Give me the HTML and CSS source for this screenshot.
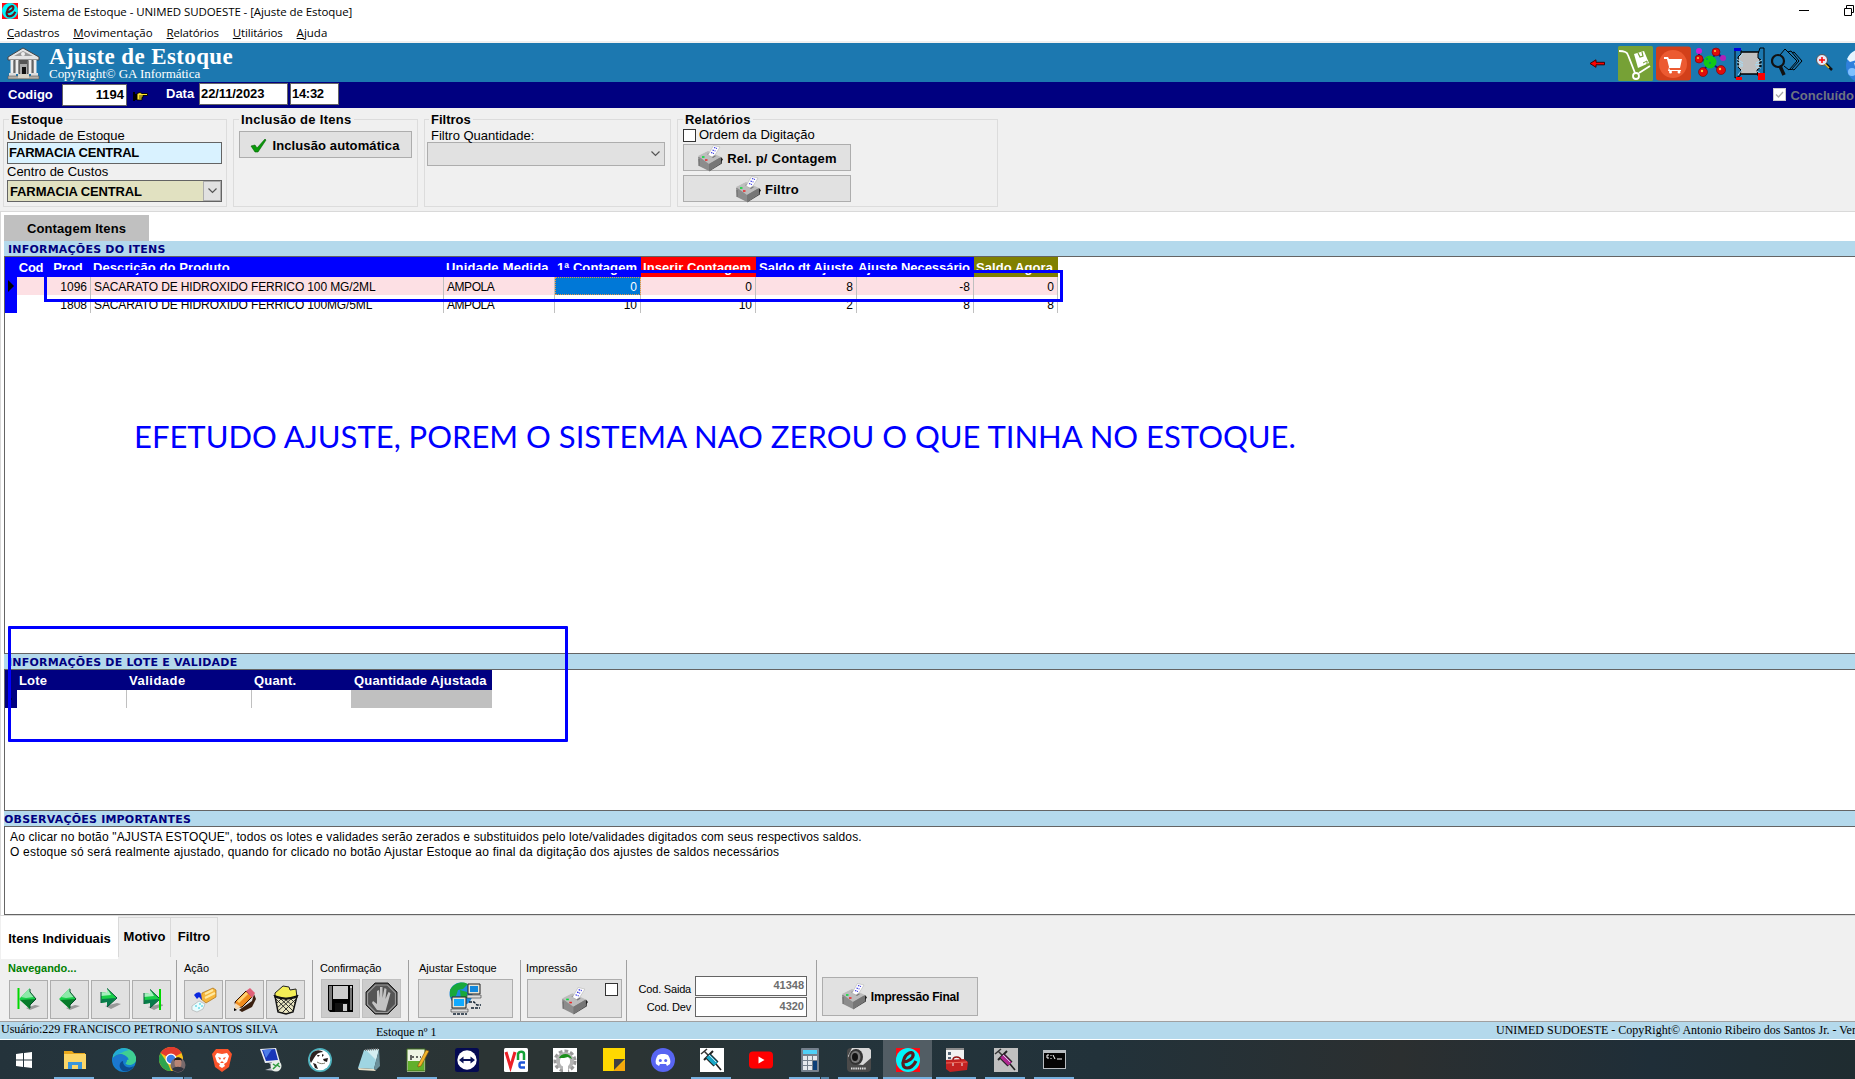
FILE: index.html
```html
<!DOCTYPE html>
<html lang="pt-BR">
<head>
<meta charset="utf-8">
<title>Sistema de Estoque</title>
<link rel="stylesheet" href="styles.css">
</head>
<body>
<svg class="defs" aria-hidden="true">
  <defs>
    <symbol id="printer" viewBox="0 0 26 27">
      <path d="M12 26.500l13-8v-5l-12 6z" fill="#444"/>
      <path d="M1 12l9-5 14 6v5l-12 8L2 21z" fill="#8c8c8c"/>
      <path d="M1 11l10-5 13 6-12 7z" fill="#bdbdbd"/>
      <path d="M12 19l12-7v6l-12 8z" fill="#767676"/>
      <path d="M24 12l2 2.500-2 2.500z" fill="#222"/>
      <path d="M10 9l3-1 6 3-3 2z" fill="#777"/>
      <path d="M11 10l5.500-9.500L23 2l-5 8-3 2z" fill="#fff" stroke="#aaa" stroke-width=".5"/>
      <path d="M17 2.500l3 1M15.500 5l3 1M14 7.500l3 1" stroke="#3030e0" stroke-width="1.200" stroke-dasharray="1.500 .7"/>
      <path d="M5 12h2.500" stroke="#0d3" stroke-width="1.500"/>
      <path d="M8 15h2.500" stroke="#e22" stroke-width="1.500"/>
      <path d="M2 14v7" stroke="#666" stroke-width="1"/>
    </symbol>
    <symbol id="arrow-left" viewBox="0 0 22 22">
      <path d="M8 20l9-3 5 1-10 4z" fill="#999"/>
      <path d="M1 11L12 0v4l6 7-6 6v4z" fill="#18cf48"/>
      <path d="M12 0v4l4 5-8 1-5-1z" fill="#8beaa8"/>
      <path d="M2 12l16-1-6 6v4z" fill="#087a2b"/>
      <path d="M12 1v3l6 7-6 6v3" stroke="#064f2a" fill="none"/>
    </symbol>
    <symbol id="arrow-right" viewBox="0 0 22 22">
      <path d="M6 18l12-3 4 1-10 5z" fill="#999"/>
      <path d="M18 10L8 0v5L2 4v11l6-1v5z" fill="#18cf48"/>
      <path d="M8 0v5L2 4v4l10-1z" fill="#a4f0bc"/>
      <path d="M3 11l14-1-9 9v-5l-6 1z" fill="#087a4b"/>
      <path d="M2 4v11M8 .5l10 9.500L8 19" stroke="#064f3a" fill="none"/>
    </symbol>
    <symbol id="e-logo" viewBox="0 0 24 24">
      <path d="M0 0h24v24H0z" fill="#ff0a14"/>
      <circle cx="12" cy="12" r="12" fill="#00f6fb"/>
      <path d="M7 14C12 14 18 10 17 6c-1-3-7-1-9 5-2 5-1 9 3 9 4 0 7-3 9-7" fill="none" stroke="#5a1c20" stroke-width="3.200"/>
    </symbol>
    <symbol id="syringe" viewBox="0 0 24 24">
      <path d="M1 6l6-5M4 3l6 6" stroke="#333" stroke-width="1.500"/>
      <path d="M4 12l9-9" stroke="#222" stroke-width="2"/>
      <path d="M8 8l8 8" stroke="#222" stroke-width="7"/>
      <path d="M8 8l8 8" stroke="currentColor" stroke-width="5"/>
      <path d="M9 7l7 7" stroke="#cfd8e8" stroke-width="1"/>
      <path d="M16 16l5 6" stroke="#222" stroke-width="1.600"/>
    </symbol>
  </defs>
</svg>

<header class="titlebar">
  <div class="caption">
    <svg class="app-icon" width="16" height="16"><use href="#e-logo"/></svg>
    <span class="t title">Sistema de Estoque - UNIMED SUDOESTE - [Ajuste de Estoque]</span>
    <svg class="controls" width="56" height="12" fill="none" stroke="#000" stroke-width="1"><path d="M0 5.500h10M45.500 3.500h7v7h-7zM47.500 3v-2.500h7v7H53"/></svg>
  </div>
  <nav class="menu">
    <span class="t m1"><u>C</u>adastros</span><span class="t m2"><u>M</u>ovimentação</span><span class="t m3"><u>R</u>elatórios</span><span class="t m4"><u>U</u>tilitários</span><span class="t m5"><u>A</u>juda</span>
  </nav>
</header>

<section class="banner">
  <svg class="bank" width="33" height="33" viewBox="0 0 33 33">
    <path d="M1 10L16 1l16 9v3H1z" fill="#e4e4e4" stroke="#444"/>
    <path d="M7 9l9-5 10 5z" fill="#999"/><circle cx="16" cy="7" r="2" fill="#eee"/>
    <path d="M4 13h25v14H4z" fill="#555"/>
    <path d="M5 13v14M10 13v14M23 13v14M28 13v14" stroke="#eee" stroke-width="3"/>
    <path d="M7 14v12M12 14v12M21 14v12M26 14v12" stroke="#777"/>
    <path d="M13 17h7v10h-7z" fill="#aaa"/><path d="M15 20h4v7h-4z" fill="#111"/>
    <path d="M2 26h7v3H2zM24 26h7v3h-7z" fill="#ddd"/><path d="M1 29h31v3H1z" fill="#b4b0a8" stroke="#555" stroke-width=".6"/><path d="M11 27h11v4H11z" fill="#d8d4c8"/>
  </svg>
  <div class="heading">
    <h1><span class="t h1t">Ajuste de Estoque</span></h1>
    <p><span class="t copy">CopyRight© GA Informática</span></p>
  </div>
  <div class="toolbar">
    <svg width="16" height="9"><path d="M1 4.500L7 .8v2.500h8.500v2.500H7v2.500z" fill="#f00" stroke="#400" stroke-width="1"/></svg>
    <svg width="35" height="35"><rect width="35" height="35" rx="1.500" fill="#76a136"/><g fill="none" stroke="#fff" stroke-width="1.800"><path d="M1 5c6 0 8 1 9 4l7 18M21 27l11-7"/><circle cx="18" cy="30" r="3"/><path d="M16 8l10-3 5 12-11 5z" fill="#fff" stroke="none"/><path d="M20 7l2 4 3-1-1-4" stroke="#76a136" stroke-width="1.200"/><path d="M25 17l4-2v4" stroke="#76a136" stroke-width="1"/></g></svg>
    <svg width="35" height="35"><rect width="35" height="34" rx="3" y=".5" fill="#d2401a"/><circle cx="17" cy="18" r="14" fill="#ec5a31"/><path d="M8 11h4l1 2h13l-2 9H13l1 2h11v1H12l1-4-2-8H8z" fill="#fff"/><circle cx="14.500" cy="26" r="1.500" fill="#fff"/><circle cx="23" cy="26" r="1.500" fill="#fff"/></svg>
    <svg width="32" height="32"><path d="M4 3v9l10 3 8-10 5 6M14 15l-6 10M14 15l12 8" stroke="#10108a" stroke-width="2" fill="none"/><circle cx="4" cy="4" r="3" fill="#d11bd1"/><circle cx="28" cy="11" r="3" fill="#b020b8"/><circle cx="15" cy="15" r="6.500" fill="#10c818"/><g fill="#e00c0c" stroke="#700" stroke-width=".6"><circle cx="4" cy="12" r="4"/><circle cx="21" cy="5" r="4"/><circle cx="8" cy="25" r="4.500"/><circle cx="26" cy="23" r="4.500"/></g><g fill="#ffd23c"><circle cx="3" cy="11" r="1"/><circle cx="20" cy="4" r="1"/><circle cx="7" cy="24" r="1.200"/><circle cx="25" cy="22" r="1.200"/></g><path d="M11 12h2M14 16h2" stroke="#087" stroke-width="1.500"/></svg>
    <svg width="33" height="33"><path d="M5 5h22v22H5z" fill="#c0c0c0" stroke="#000" stroke-width="1.500"/><path d="M2 3v28l5-2 1-6-3-3V10l3-3V3zM31 1h-4l-2 6v4l3 2v7l-4 3 1 6 6 3z" fill="#1c78b0" stroke="#000"/><path d="M4 12l6 4M4 15l6 3M4 19l6 0M29 13l-6 3M29 17l-7 1M6 11l4-5M28 21l-5-1M9 23l-4 5M24 24l4 3" stroke="#a6dcf5" stroke-width="1"/><path d="M1 1h7v3H1z" fill="#0000e0"/><path d="M3 30h6v3H3zM25 26h7v7h-7z" fill="#f00"/></svg>
    <svg width="32" height="30" fill="none" stroke="#000"><path d="M9 7l5-6 12 12-8 9-5-4M17 4l3-1 8 10-8 9-1-1M21 5l2-1 8 9-8 9-2-1" stroke-width="1"/><circle cx="7" cy="13" r="6" stroke-width="2.200" stroke="#111"/><path d="M9 18l4 9" stroke-width="3.500" stroke="#111"/></svg>
    <svg width="18" height="18"><circle cx="6" cy="6" r="5.500" fill="#e8e8f8" stroke="#555"/><path d="M6 3v6M3 6h6" stroke="#f00" stroke-width="1.500"/><path d="M10 10l6 6" stroke="#111" stroke-width="2.500"/><path d="M9 10l4 4" stroke="#e8b820" stroke-width="1.500"/></svg>
    <svg width="36" height="36"><circle cx="18" cy="21" r="17" fill="#2f80dc"/><path d="M2 14c3-7 8-10 16-10v9L5 17z" fill="#e6f5ff"/><path d="M9 18l9-2v10l-6 2z" fill="#bfe3ff"/><circle cx="7" cy="27" r="4" fill="#7fc0ff"/></svg>
  </div>
</section>

<section class="record">
  <label class="lb codigo"><span class="t b13 w1">Codigo</span></label>
  <div class="inp cod"><span class="t b13 w2">1194</span></div>
  <svg class="hand" width="15" height="9"><path d="M0 0h2v9H0zM2 2h2v6H2z" fill="#000"/><path d="M4 1.500L7 .5l2 1h5.500v2H10v2H9v2.500H4z" fill="#ffe62e" stroke="#000" stroke-width=".9"/><path d="M6 4h4M6 6h3" stroke="#000" stroke-width=".7"/></svg>
  <label class="lb data"><span class="t b13 w3">Data</span></label>
  <div class="inp date"><span class="t b13 w4">22/11/2023</span></div>
  <div class="inp time"><span class="t b13 w5">14:32</span></div>
  <div class="done"><svg width="13" height="13"><path d="M0 0h13v13H0z" fill="#ccc"/><path d="M1 1h11v11H1z" fill="#fff"/><path d="M3 6.500l2.500 2.500L10 4" fill="none" stroke="#aaa" stroke-width="1.300"/></svg><span class="t b13 w6">Concluído</span></div>
</section>

<section class="options">
  <div class="group g1">
    <h2><span class="t b13 o1">Estoque</span></h2>
    <p class="fl"><span class="t r13 o2">Unidade de Estoque</span></p>
    <div class="field sky"><span class="t b13 o3">FARMACIA CENTRAL</span></div>
    <p class="fl f2"><span class="t r13 o4">Centro de Custos</span></p>
    <div class="field olive"><span class="t b13 o5">FARMACIA CENTRAL</span><span class="drop"><svg width="9" height="6"><path d="M.5.5l4 4 4-4" fill="none" stroke="#555" stroke-width="1.200"/></svg></span></div>
  </div>
  <div class="group g2">
    <h2><span class="t b13 o6">Inclusão de Itens</span></h2>
    <div class="btn auto"><svg width="17" height="15"><path d="M1 8l4-1 2 3 8-9 1 1-8 12H5z" fill="#0a9a0a" stroke="#056005" stroke-width=".6"/></svg><span class="t b13 o7">Inclusão automática</span></div>
  </div>
  <div class="group g3">
    <h2><span class="t b13 o8">Filtros</span></h2>
    <p class="fl"><span class="t r13 o9">Filtro Quantidade:</span></p>
    <div class="btn combo"><svg width="9" height="6"><path d="M.5.5l4 4 4-4" fill="none" stroke="#555" stroke-width="1.200"/></svg></div>
  </div>
  <div class="group g4">
    <h2><span class="t b13 o10">Relatórios</span></h2>
    <div class="check"><i></i><span class="t r13 o11">Ordem da Digitação</span></div>
    <div class="btn rel"><svg width="26" height="27"><use href="#printer"/></svg><span class="t b13 o12">Rel. p/ Contagem</span></div>
    <div class="btn rel"><svg width="26" height="27"><use href="#printer"/></svg><span class="t b13 o13">Filtro</span></div>
  </div>
</section>

<main class="sheet">
  <div class="tab-top"><span class="t b13 s1">Contagem Itens</span></div>
  <h3 class="bar"><span class="t v11 s2">INFORMAÇÕES DO ITENS</span></h3>
  <div class="pane items">
    <div class="row head">
      <span></span><span class="c"><b class="t i1">Cod</b></span><span class="c"><b class="t i2">Prod</b></span><span><b class="t i3">Descrição do Produto</b></span><span><b class="t i4">Unidade Medida</b></span><span><b class="t i5">1ª Contagem</b></span><span class="red"><b class="t i6">Inserir Contagem</b></span><span class="sd"><b class="t i7">Saldo dt Ajuste</b></span><span class="an"><b class="t i8">Ajuste Necessário</b></span><span class="gold"><b class="t i9">Saldo Agora</b></span>
    </div>
    <div class="row pink">
      <span class="ind"><svg width="7" height="12"><path d="M0 0l6 6-6 6z"/></svg></span><span></span><span class="n">1096</span><span><em class="t d2">SACARATO DE HIDROXIDO FERRICO 100 MG/2ML</em></span><span><em class="t d3">AMPOLA</em></span><span class="n sel">0</span><span class="n">0</span><span class="n">8</span><span class="n">-8</span><span class="n">0</span>
    </div>
    <div class="row">
      <span class="ind"></span><span></span><span class="n">1808</span><span><em class="t d2">SACARATO DE HIDROXIDO FERRICO 100MG/5ML</em></span><span><em class="t d3">AMPOLA</em></span><span class="n">10</span><span class="n">10</span><span class="n">2</span><span class="n">8</span><span class="n">8</span>
    </div>
  </div>
  <h3 class="bar"><span class="t v11 s3">INFORMAÇÕES DE LOTE E VALIDADE</span></h3>
  <div class="pane lots">
    <div class="lrow lhead"><span></span><span><b class="t l1">Lote</b></span><span><b class="t l2">Validade</b></span><span><b class="t l3">Quant.</b></span><span><b class="t l4">Quantidade Ajustada</b></span></div>
    <div class="lrow"><span class="ind"><svg width="5" height="8"><path d="M0 0l4 4-4 4z"/></svg></span><span></span><span></span><span></span><span class="grey"></span></div>
  </div>
  <h3 class="bar obs-bar"><span class="t v11 s4">OBSERVAÇÕES IMPORTANTES</span></h3>
  <div class="pane obs">
    <p><span class="t ob1">Ao clicar no botão "AJUSTA ESTOQUE", todos os lotes e validades serão zerados e substituidos pelo lote/validades digitados com seus respectivos saldos.</span></p>
    <p><span class="t ob2">O estoque só será realmente ajustado, quando for clicado no botão Ajustar Estoque ao final da digitação dos ajustes de saldos necessários</span></p>
  </div>
</main>

<nav class="tabs">
  <div class="active"><span class="t b13 p1">Itens Individuais</span></div>
  <div class="tb"><span class="t b13 p2">Motivo</span></div>
  <div class="tc"><span class="t b13 p3">Filtro</span></div>
</nav>

<section class="actions">
  <div class="blk k1">
    <p class="cap nav"><span class="t q1">Navegando...</span></p>
    <div class="keys">
      <div class="btn sq"><svg width="23" height="24"><path d="M1.500 0v21" stroke="#00d800" stroke-width="2"/><use href="#arrow-left" x="1" width="22" height="22"/></svg></div>
      <div class="btn sq"><svg width="23" height="24"><use href="#arrow-left" width="22" height="22"/></svg></div>
      <div class="btn sq"><svg width="23" height="24"><use href="#arrow-right" width="22" height="22"/></svg></div>
      <div class="btn sq"><svg width="23" height="24"><use href="#arrow-right" y="1" x="2" width="22" height="22"/><path d="M20 1v21" stroke="#00d800" stroke-width="2"/></svg></div>
    </div>
  </div>
  <div class="blk k2">
    <p class="cap"><span class="t q2">Ação</span></p>
    <div class="keys">
      <div class="btn sq"><svg width="26" height="26"><path d="M11 6l11-5 3 2v7l-10 6-5-4z" fill="#f6b63c" stroke="#a06000" stroke-width=".6"/><path d="M14 7l8-4M14 11l10-5" stroke="#ffe9a0" stroke-width="2"/><path d="M3 8c4-4 7-3 7 0l1 5-3-3-2 2z" fill="#0a28e0"/><path d="M1 19l7-5 6 3-2 5-6 3-5-2z" fill="#e8fdff" stroke="#999" stroke-width=".5"/><path d="M4 19h2M8 17h2M7 21h2M10 19h2" stroke="#3cd"/></svg></div>
      <div class="btn sq"><svg width="22" height="24"><path d="M5 22l13-9 2-7 2 5-4 8-10 5z" fill="#3a2010"/><path d="M2 20L1 14 12 3l6 6L8 19z" fill="#f08c1e" stroke="#301000"/><path d="M4 14l9-9" stroke="#ffd070" stroke-width="3"/><path d="M12 3l4-3 5 5-3 5z" fill="#e06078"/><path d="M1 15l6 4-6 3z" fill="#f4d8b0"/><path d="M0 20l3 2-3 1z"/></svg></div>
      <div class="btn sq"><svg width="26" height="30"><path d="M2 8l8-7 6 1 1 3 6-1 1 9H2z" fill="#f4ee56" stroke="#222"/><path d="M2 11l3 16 8 2 7-2 4-16-11 3z" fill="#e8e4c0" stroke="#111" stroke-width="1.500"/><path d="M3 14l14 14M7 13l13 13M12 14l10 9M17 13l6 6M23 14L9 28M19 13L5 26M14 14l-10 9M9 13l-6 6" stroke="#222" stroke-width=".9"/><path d="M1 10c2 5 22 5 24 0" fill="none" stroke="#111" stroke-width="1.500"/></svg></div>
    </div>
  </div>
  <div class="blk k3">
    <p class="cap"><span class="t q3">Confirmação</span></p>
    <div class="keys">
      <div class="btn sq off"><svg width="25" height="27"><path d="M0 0h25v27H2l-2-2z"/><path d="M1 1h3v24H1zM22 3h2v22h-2z" fill="#777"/><path d="M5 1h15v13H5z" fill="#ccc"/><path d="M7 18h13v9H7z" fill="#111"/><path d="M15 19h4v7h-4z" fill="#ccc"/><path d="M22 1h2v2h-2z" fill="#ccc"/></svg></div>
      <div class="btn sq off"><svg width="33" height="33"><path d="M10 1h13l9 9v13l-9 9H10l-9-9V10z" fill="#444" stroke="#222"/><path d="M10.500 3h12l8 8v11.500l-8 8h-12l-8-8V11z" fill="#555" stroke="#999" stroke-width="1.200"/><path d="M12 28l-5-7 1-2 4 3V9l2-1 1 8V5h2.500v11l2-10 2 1-1 10 3-7 2 1-3 11-2 7z" fill="#c4c4c4"/></svg></div>
    </div>
  </div>
  <div class="blk k4">
    <p class="cap"><span class="t q4">Ajustar Estoque</span></p>
    <div class="btn wide"><svg width="33" height="33"><circle cx="12" cy="12" r="11.500" fill="#1d8adf"/><path d="M1 8C5 0 15-1 19 2l-5 5-5 1-2 6-6 1zM11 8l7 2v6l-6 2z" fill="#18a83a"/><path d="M19 2h12v10H19z" fill="#e4e4d8" stroke="#222"/><path d="M21 4h8v6h-8z" fill="#18d"/><path d="M18 13h14v3H18z" fill="#ddd" stroke="#333" stroke-width=".6"/><path d="M3 15h14v11H3z" fill="#e4e4d8" stroke="#222"/><path d="M5 17h10v7H5z" fill="#1af"/><path d="M2 27h17v3H2z" fill="#ddd" stroke="#333" stroke-width=".6"/><path d="M4 32h14M20 20h5l3 3h4M22 26h9" stroke="#123" stroke-width="1.300" stroke-dasharray="3 1" fill="none"/></svg></div>
  </div>
  <div class="blk k5">
    <p class="cap"><span class="t q5">Impressão</span></p>
    <div class="btn wide print"><svg width="27" height="28"><use href="#printer" width="27" height="28"/></svg><i></i></div>
  </div>
  <div class="blk k6">
    <div class="pair"><span class="t q6">Cod. Saida</span><div class="num"><span class="t">41348</span></div></div>
    <div class="pair"><span class="t q7">Cod. Dev</span><div class="num"><span class="t">4320</span></div></div>
  </div>
  <div class="blk k7">
    <div class="btn final"><svg width="26" height="27"><use href="#printer"/></svg><span class="t q10">Impressão Final</span></div>
  </div>
</section>

<footer class="status">
  <span class="u1">Usuário:229 FRANCISCO PETRONIO SANTOS SILVA</span>
  <span class="u2">Estoque nº 1</span>
  <span class="t u3">UNIMED SUDOESTE - CopyRight© Antonio Ribeiro dos Santos Jr. - Ver</span>
</footer>

<footer class="taskbar">
  <div class="start"><svg width="16" height="16" fill="#fff"><path d="M0 2l7-1v6.500H0zM8 1l8-1v7.500H8zM0 8.500h7V15l-7-1zM8 8.500h8V16l-8-1z"/></svg></div>
  <div class="run"><svg width="24" height="24"><path d="M1 3h8l2 2h11v16H1z" fill="#e9a81c"/><path d="M1 6h22v15H1z" fill="#fcd667"/><path d="M5 14h14v7h-4v-4H9v4H5z" fill="#3a95dc"/></svg></div>
  <div><svg width="24" height="24"><circle cx="12" cy="12" r="12" fill="#1580cf"/><path d="M1 8C4-2 20-3 24 9c1 6-4 8-8 7 3-6-3-10-8-9-4 0-6 1-7 3z" fill="#3fcf92"/><path d="M1 8C4 0 12-1 17 2c-5 1-9 4-16 6z" fill="#22a9d8"/><path d="M1 10c5-7 14-4 14 2-6-1-6 8 1 10-7 3-15-3-15-12z" fill="#1c77cf"/><path d="M11 13c0 6 6 8 11 5-3 5-8 6-11 5-5-3-4-9 0-10z" fill="#0c4b8f"/><path d="M15 12c0 3-2 3-1 4 3 2 9 1 10-4l-4-1z" fill="#3fcf92"/></svg></div>
  <div class="run more"><svg width="28" height="26"><circle cx="12" cy="12" r="12" fill="#fbc116"/><path d="M12 12L1.600 6a12 12 0 0 1 20.800 0z" fill="#e33b2e"/><path d="M1.600 6L9 17l3 7A12 12 0 0 1 1.600 6z" fill="#2da44e"/><path d="M12 0a12 12 0 0 1 10.500 6H12z" fill="#e33b2e"/><circle cx="12" cy="12" r="5.500" fill="#fff"/><circle cx="12" cy="12" r="4.300" fill="#3b7de9"/><circle cx="19" cy="18" r="7.500" fill="#786a6c"/><ellipse cx="19" cy="16" rx="3.500" ry="4.500" fill="#b98574"/><path d="M15 14c0-5 8-5 8 0l-1-1h-6z" fill="#26201f"/><path d="M13 22c3-3 9-3 12 0-3 4-9 4-12 0z" fill="#313540"/></svg></div>
  <div><svg width="20" height="24"><path d="M4 1h12l4 5-3 13-7 5-7-5L0 6z" fill="#fb542b"/><path d="M5 5l5 1 5-1 2 3-2 6-3 2 1 2-3 2-3-2 1-2-3-2-2-6z" fill="#fff"/><path d="M6 9l3 1-1 2zM14 9l-3 1 1 2zM8 15l2-2 2 2" fill="#fb542b"/></svg></div>
  <div><svg width="24" height="24"><path d="M1 1l16-1 4 14-15 1z" fill="#e8ecf4"/><path d="M3 2l13-1 3 11-12 1z" fill="#1836b8"/><path d="M4 2l9-1-6 9z" fill="#4c7ce8"/><path d="M10 15h5v4l-9 3 12 1z" fill="#b8bcc4"/><circle cx="17" cy="18" r="5.500" fill="#e8eee8"/><path d="M14 16l3 2-3 3M20 15l-2 2 3 2" stroke="#2a9a3a" stroke-width="1.500" fill="none"/></svg></div>
  <div class="run"><svg width="24" height="24"><circle cx="12" cy="12" r="12" fill="#4fb3bf"/><circle cx="12" cy="12" r="10.300" fill="#fff"/><path d="M4 5c4-4 9-3 11-1-4 0-7 2-9 6l-3 5c-2-3-1-7 1-10z" fill="#2b211f"/><path d="M5 15l3 1 2 5-3-1z" fill="#2b211f"/><path d="M9 7l3 0-2 2zM14 6l2 1-2 2zM15 11l5-1-1 4-3-1z" fill="#231a18"/><path d="M9 14c3 2 6 2 8 1" stroke="#776" fill="none"/></svg></div>
  <div><svg width="24" height="24"><path d="M7 2l15-1-5 20-16-1z" fill="#9fd5e2"/><path d="M9 2l13-1-3 11z" fill="#d4eef2"/><path d="M17 21l5-20 1 17-4 4z" fill="#6b8f9a"/><path d="M1 20l16 1 2 2-17-1z" fill="#e8e0c8"/><path d="M8 2l14-1" stroke="#777" stroke-dasharray="1 1" stroke-width="2"/></svg></div>
  <div class="run"><svg width="24" height="24"><path d="M1 1h18v23H1z" fill="#eef4e4"/><path d="M2 13h16v10H2z" fill="#62b02c"/><path d="M1 1h18v22H1z" fill="none" stroke="#3e6e1c"/><path d="M5 7v5M6 9h2M10 9h2M14 9h1" stroke="#333" stroke-width="1.500"/><path d="M12 17l8-15 3 1-8 15-3 1z" fill="#f1b42a" stroke="#7a4a10" stroke-width=".6"/></svg></div>
  <div><svg width="24" height="24"><rect width="24" height="24" rx="2.500" fill="#050a52"/><circle cx="12" cy="12" r="9.700" fill="#fff"/><path d="M4 12l4.500-3.500v2.500h7V8.500L20 12l-4.500 3.500V13h-7v2.500z" fill="#0a1258"/></svg></div>
  <div><svg width="24" height="24"><rect width="24" height="24" rx="1.500" fill="#fff"/><path d="M2 4l4.500 15L11 4" stroke="#ec2027" stroke-width="3" fill="none"/><path d="M14 12V6c1-3 6-3 6 0v6" stroke="#13a338" stroke-width="2.500" fill="none"/><path d="M21 14.500h-4c-2 0-2 5 0 5h4" stroke="#1f55d8" stroke-width="2.500" fill="none"/></svg></div>
  <div><svg width="24" height="24"><path d="M0 0h24v24H0z" fill="#fff"/><circle cx="12" cy="13" r="9.500" fill="none" stroke="#999" stroke-width="4" stroke-dasharray="3.500 2"/><circle cx="12" cy="13" r="7" fill="none" stroke="#b4b4b4" stroke-width="4"/><circle cx="12" cy="14" r="5" fill="#fff"/><path d="M6 10c2-5 11-6 13 1l-4-2-4 1z" fill="#1b8f1b"/><path d="M10 18h5v6h-5z" fill="#fff"/></svg></div>
  <div><svg width="22" height="23"><path d="M0 0h22v23H0z" fill="#ffd800"/><path d="M10 23l12-11v11z" fill="#f5a80c"/><path d="M11 11h11L11 22z" fill="#3f4042"/></svg></div>
  <div><svg width="24" height="24"><circle cx="12" cy="12" r="12" fill="#5865f2"/><path d="M7 7l3-1h4l3 1c2 3 3 6 2 9l-3 2-1-2H9l-1 2-3-2c-1-3 0-6 2-9z" fill="#fff"/><circle cx="9.300" cy="12.500" r="1.500" fill="#5865f2"/><circle cx="14.700" cy="12.500" r="1.500" fill="#5865f2"/></svg></div>
  <div class="run"><svg class="cyan" width="24" height="24"><path d="M0 0h24v24H0z" fill="#fff"/><use href="#syringe"/></svg></div>
  <div><svg width="24" height="18"><rect width="24" height="17" y=".5" rx="4" fill="#f00"/><path d="M9.500 5.500v7l6-3.500z" fill="#fff"/></svg></div>
  <div class="run more"><svg width="18" height="24"><rect width="18" height="24" rx="1" fill="#75808c"/><path d="M2 2h14v4H2z" fill="#4fd0f7"/><g fill="#e6eaee"><path d="M2 8h4v4H2zM7 8h4v4H7zM12 8h4v4h-4zM2 13h4v4H2zM7 13h4v4H7zM2 18h4v4H2zM7 18h4v4H7z"/></g><path d="M12 13h4v9h-4z" fill="#0c3f78"/></svg></div>
  <div class="run"><svg width="24" height="24"><rect width="24" height="24" rx="4" fill="#4a4a4a"/><path d="M5 0h17l2 2v8l-8 7-9-1-6-8z" fill="#d8d8d8"/><ellipse cx="9" cy="9" rx="7" ry="8" fill="#333"/><ellipse cx="8.500" cy="9" rx="5" ry="6" fill="#777"/><ellipse cx="8" cy="9" rx="3" ry="4" fill="#111"/><path d="M4 20.500h15" stroke="#ddd" stroke-width="2" stroke-dasharray="1.500 .7"/></svg></div>
  <div class="run current"><svg width="24" height="24"><use href="#e-logo"/></svg></div>
  <div class="run"><svg width="24" height="24"><path d="M1 0h18v17H1z" fill="#f2f2f2"/><path d="M1 0h18v2H1z" fill="#8d8d8d"/><path d="M3 4h3v3H3zM3 9h3v2H3z" fill="#567"/><path d="M1 12l18-1 4 3-1 8-17 2-4-3z" fill="#c32222"/><path d="M1 15l21-1" stroke="#ef6a5a" stroke-width="1"/><path d="M8 12c0-4 7-4 8 0" stroke="#951414" fill="none" stroke-width="1.500"/><path d="M8 15v3M17 15v3" stroke="#eee"/></svg></div>
  <div class="run"><svg class="violet" width="24" height="24"><path d="M0 0h24v24H0z" fill="#c0c0c0"/><use href="#syringe"/></svg></div>
  <div class="run"><svg width="23" height="19"><path d="M0 0h23v19H0z" fill="#b9bec2"/><path d="M1 3h21v15H1z" fill="#050505"/><path d="M6 5H4v3h2M8 5v1M8 8v1M10 5l2 4M14 9h5" stroke="#fff" fill="none"/></svg></div>
</footer>

<div class="mark mark-row"></div>
<div class="mark mark-lot"></div>
<div class="note">EFETUDO AJUSTE, POREM O SISTEMA NAO ZEROU O QUE TINHA NO ESTOQUE.</div>
</body>
</html>
```
FILE: styles.css
```css
* { box-sizing: border-box; }
body { margin: 0; width: 1855px; height: 1079px; overflow: hidden; background: #f0f0f0; color: #000; font: 13px/16px "Liberation Sans", Arial, sans-serif; position: relative; }
h1, h2, h3, p { margin: 0; font-weight: normal; font-size: inherit; }
svg { display: block; flex: none; }
em { font-style: normal; }
.defs { position: absolute; width: 0; height: 0; }
.t { display: inline-block; white-space: nowrap; flex: none; }
.b13 { font-weight: bold; }
.v11 { font: bold 11px/17px "DejaVu Sans", Verdana, sans-serif; color: #000080; letter-spacing: .21px; }

/* window caption and menu */
.titlebar { height: 43px; background: #fff; border-bottom: 2px solid #f0f0f0; font: 11.5px/16px "Open Sans", "Noto Sans", sans-serif; }
.caption { display: flex; height: 24px; padding: 3px 0 0 2px; }
.app-icon { margin-right: 5px; }
.caption .title { line-height: 17px; letter-spacing: -.08px; }
.controls { margin: 2px 0 0 auto; }
.menu { display: flex; gap: 14px; padding-left: 7px; height: 17px; line-height: 17px; }
.menu u { text-underline-offset: 1px; }
.m1, .m3, .m4 { letter-spacing: -.17px; }

/* blue banner */
.banner { height: 39px; background: #1c78b0; display: flex; color: #fff; font-family: "Liberation Serif", "Times New Roman", serif; }
.bank { margin: 4px 9px 0 7px; }
.heading h1 { font-weight: bold; font-size: 23px; line-height: 24px; height: 24px; padding-top: 2px; letter-spacing: .38px; }
.heading p { font-size: 13px; line-height: 14px; letter-spacing: -.04px; }
.toolbar { margin-left: auto; margin-right: -27px; display: grid; grid-template-columns: repeat(8, 38px); place-items: center; padding-top: 1px; }

/* record header */
.record { height: 26px; background: #000080; color: #fff; display: flex; align-items: flex-start; padding-left: 8px; }
.lb { line-height: 25px; }
.lb.codigo { width: 54px; }
.inp { height: 22px; background: #fff; color: #000; border: 1px solid #646464; line-height: 20px; margin-top: 1px; padding: 0 1px; }
.inp.cod { width: 65px; margin-top: 2px; text-align: right; padding-right: 2px; }
.hand { margin: 10px 18px 0 6px; }
.lb.data { width: 33px; line-height: 23px; }
.inp.date { width: 89px; margin-right: 2px; line-height: 19px; letter-spacing: -.1px; }
.inp.time { width: 49px; line-height: 19px; letter-spacing: -.3px; }
.done { margin-left: auto; display: flex; gap: 4px; padding: 6px 1px 0 0; color: #6d7480; line-height: 15px; }

/* option groups */
.options { height: 103px; display: flex; padding: 11px 0 0 3px; }
.group { height: 88px; border: 1px solid #dcdcdc; }
.group h2 { height: 16px; margin: -9px 0 0; line-height: 18px; }
.group h2 .t { background: #f0f0f0; padding: 0 2px; line-height: 17px; }
.g1 { width: 224px; margin-right: 6px; padding-left: 3px; }
.g1 h2 { padding-left: 2px; letter-spacing: .1px; }
.fl { height: 16px; line-height: 17px; }
.g1 .fl { height: 15px; }
.field { width: 215px; height: 22px; border: 1px solid #646464; padding-left: 1px; line-height: 19px; }
.sky { background: #d9f2ff; letter-spacing: -.24px; }
.g1 .f2 { height: 16px; line-height: 15px; }
.olive { background: #e1e1c1; display: flex; padding-left: 2px; line-height: 21px; letter-spacing: -.12px; }
.drop { margin-left: auto; width: 18px; background: #e1e1e1; border: 1px solid #adadad; display: grid; place-items: center; }
.g2 { width: 185px; margin-right: 6px; padding-left: 5px; }
.g2 h2 { letter-spacing: .3px; }
.btn { background: #e1e1e1; border: 1px solid #adadad; display: flex; align-items: center; justify-content: center; }
.auto { width: 173px; height: 27px; margin-top: 4px; gap: 5px; padding: 2px 1px 0 0; letter-spacing: .11px; }
.g3 { width: 247px; margin-right: 6px; padding-left: 2px; }
.g3 h2 { padding-left: 2px; }
.g3 .fl { padding-left: 4px; }
.combo { width: 238px; height: 24px; justify-content: flex-end; padding-right: 4px; margin-top: -1px; }
.g4 { width: 321px; padding-left: 5px; }
.check { display: flex; gap: 3px; height: 14px; align-items: center; margin: 1px 0 2px; }
.check i, .print i { width: 13px; height: 13px; background: #fff; border: 1px solid #333; }
.rel { width: 168px; height: 27px; margin-bottom: 4px; gap: 4px; letter-spacing: .22px; padding-top: 2px; }
.g4 h2 { letter-spacing: .2px; }

/* main sheet */
.sheet { background: #fff; border-top: 1px solid #d9d9d9; border-left: 1px solid #d9d9d9; padding: 3px 0 0 3px; height: 704px; }
.tab-top { width: 145px; height: 26px; background: #c0c0c0; text-align: center; line-height: 27px; letter-spacing: .11px; }
.bar { height: 15px; background: #b4d9ec; padding-left: 4px; line-height: 17px; display: flex; }
.bar.obs-bar { padding-left: 0; }
.pane { border: 1px solid #646464; border-right: 0; }
.items { height: 398px; }
.row { display: grid; grid-template-columns: 12px 28px 46px 353px 111px 86px 115px 101px 117px 84px; width: 1053px; height: 18px; line-height: 20px; font-size: 12px; }
.row span { border-right: 1px solid #c0c0c0; padding-left: 3px; overflow: hidden; height: 18px; }
.row .ind, .lrow .ind { background: #00f; border-right: 0; padding: 0; display: flex; align-items: center; padding-left: 3px; }
.row span:nth-child(2) { border-right: 0; }
.row.head { height: 20px; background: #00f; color: #fff; line-height: 21px; font-size: 13px; }
.row.head span { border: 0; padding-left: 2px; height: 20px; }
.row.head .c { text-align: center; padding: 0; }
.row.head .red { background: #f00; }
.row.head .gold { background: #808000; }
.row.head .sd { padding-left: 3px; }
.row.head .an { padding-left: 1px; }
.i1 { letter-spacing: -.3px; }
.i3, .i5, .i6, .i9 { letter-spacing: .08px; }
.i4 { letter-spacing: .22px; }
.i8 { letter-spacing: -.05px; }
.d2 { letter-spacing: -.12px; }
.d3 { letter-spacing: -.45px; }
.row.pink { background: #fde0e4; }
.row .n { text-align: right; padding-right: 3px; }
.row .sel { background: #0078d7; color: #fff; outline: 1px dotted #e8963c; outline-offset: -1px; }
.lots { height: 142px; }
.lrow { display: grid; grid-template-columns: 12px 110px 125px 100px 140px; width: 487px; height: 18px; }
.lrow span { border-right: 1px solid #c0c0c0; }
.lrow .ind { background: #000080; }
.lrow .grey { background: #c0c0c0; }
.lrow.lhead { background: #000080; color: #fff; height: 20px; line-height: 21px; letter-spacing: .17px; }
.lrow.lhead span { border: 0; padding-left: 2px; }
.l2 { letter-spacing: .5px; }
.obs { height: 89px; padding: 3px 0 0 5px; font-size: 12px; line-height: 15px; }
.ob1 { letter-spacing: .15px; }
.ob2 { letter-spacing: .2px; }

/* bottom tabs */
.tabs { height: 44px; display: flex; border-top: 1px solid #d9d9d9; padding-left: 1px; }
.tabs div { text-align: center; }
.active { background: #fff; width: 117px; line-height: 46px; letter-spacing: .05px; }
.tb, .tc { border: 1px solid #d9d9d9; border-bottom: 0; margin-top: 1px; height: 40px; line-height: 37px; }
.tb { width: 53px; }
.tc { width: 47px; border-left: 0; }

/* action strip */
.actions { height: 62px; display: flex; align-items: flex-end; font-size: 11px; }
.blk { height: 61px; border-right: 1px solid #a0a0a0; padding-top: 1px; }
.cap { height: 18px; line-height: 14px; }
.cap.nav { color: #008000; font-weight: bold; margin-left: -1px; }
.keys { display: flex; gap: 2px; }
.sq { width: 39px; height: 39px; }
.off { background: #ccc; border-color: #bfbfbf; }
.wide { width: 95px; height: 39px; }
.k1 { width: 177px; padding-left: 9px; }
.k1 .keys, .k2 .keys { margin-top: 1px; }
.k2 { width: 136px; padding-left: 7px; }
.k3 { width: 96px; padding-left: 8px; }
.k3 .cap { margin-left: -1px; letter-spacing: -.1px; }
.k4 { width: 112px; padding-left: 9px; }
.k4 .cap { margin-left: 1px; }
.k5 { width: 106px; padding-left: 6px; }
.k5 .cap { margin-left: -1px; }
.print { align-items: flex-start; justify-content: flex-start; padding: 7px 0 0 33px; }
.print i { margin: -4px 0 0 17px; }
.k6 { width: 190px; padding: 16px 9px 0 0; }
.pair { display: flex; justify-content: flex-end; gap: 4px; height: 21px; line-height: 26px; letter-spacing: -.2px; }
.pair + .pair { line-height: 20px; }
.num { width: 112px; height: 20px; border: 1px solid #646464; background: #fff; color: #6d6d6d; text-align: right; padding-right: 2px; line-height: 17px; font-weight: bold; letter-spacing: 0; }
.k7 { border: 0; padding: 17px 0 0 5px; }
.final { width: 156px; height: 39px; gap: 4px; font-size: 12px; font-weight: bold; letter-spacing: -.2px; }

/* status line */
.status { height: 19px; background: #b4d9ec; border-top: 1px solid #a0a0a0; border-bottom: 1px solid #fff; display: flex; padding-left: 1px; font: 12px/16px "Liberation Serif", "Times New Roman", serif; overflow: hidden; }
.status span { flex: none; white-space: nowrap; }
.u1 { width: 375px; line-height: 15px; }
.u2 { width: 1120px; line-height: 21px; }

/* taskbar */
.taskbar { height: 39px; display: flex; background: linear-gradient(90deg, #24333b 0, #26363d 200px, #2b3434 480px, #2b3434 640px, #24343b 850px, #22323a 1100px, #2b2f30 1400px, #1f2e38 1650px, #1f2c30 1855px); }
.taskbar > div { width: 49px; height: 39px; display: grid; place-items: center; position: relative; }
.taskbar .start { width: 50px; padding-right: 2px; }
.run::after { content: ""; position: absolute; left: 4px; right: 5px; bottom: 0; height: 2px; background: #76b0df; }
.run.more::after { background: linear-gradient(90deg, #76b0df 31px, #24343b 31px, #24343b 32px, #5684a8 32px); }
.taskbar .current { background: #525d64; }
.current::after { left: 0; right: 0; }
.cyan { color: #18a8c8; }
.violet { color: #b02890; }

/* annotations drawn over the window */
.mark { position: absolute; border: 3px solid #00f; }
.mark-row { left: 44px; top: 270px; width: 1019px; height: 32px; }
.mark-lot { left: 8px; top: 626px; width: 560px; height: 116px; border-radius: 1px; }
.note { position: absolute; left: 134px; top: 415px; color: #00f; font: 31px/42px Lato, "Open Sans", sans-serif; white-space: nowrap; }
```
